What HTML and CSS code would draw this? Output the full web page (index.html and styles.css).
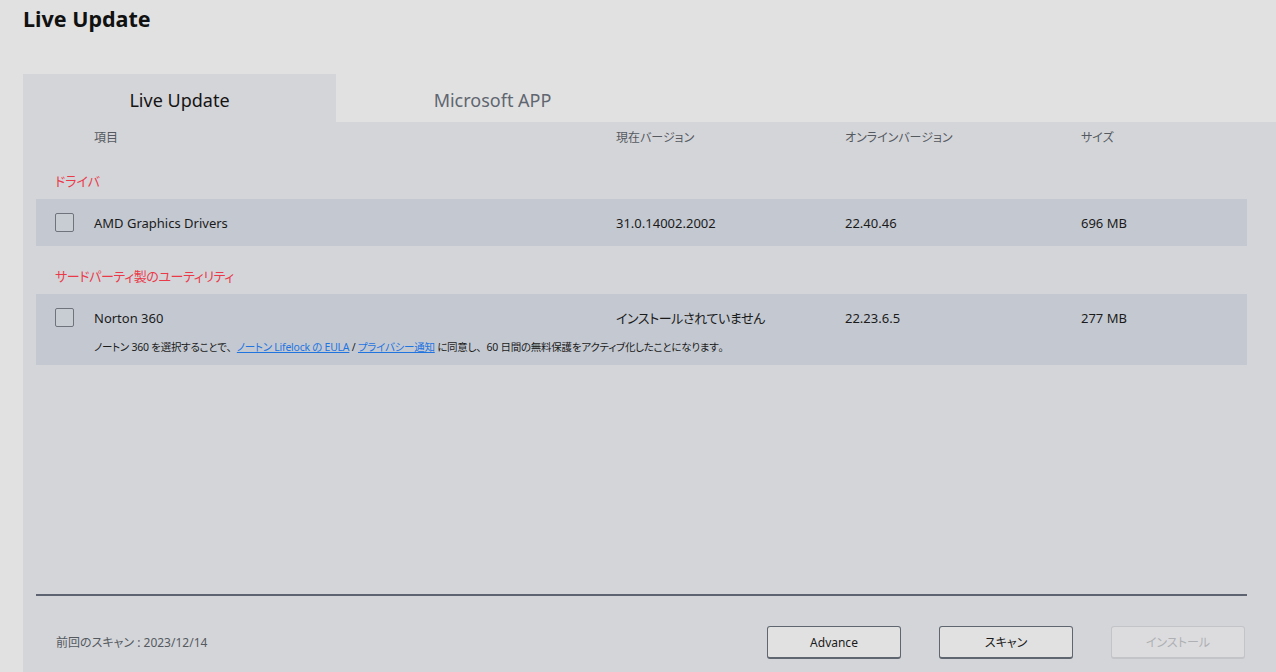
FILE: index.html
```html
<!DOCTYPE html>
<html lang="ja">
<head>
<meta charset="utf-8">
<title>Live Update</title>
<link rel="stylesheet" href="styles.css">
</head>
<body>
<div class="app">
  <header class="page-head">
    <h1 class="page-title">Live Update</h1>
  </header>
  <nav class="tabs">
    <div class="tab tab-active">Live Update</div>
    <div class="tab">Microsoft APP</div>
  </nav>
  <main class="panel">
    <section class="list">
      <div class="grid col-head">
        <span></span>
        <span>項目</span>
        <span>現在バージョン</span>
        <span>オンラインバージョン</span>
        <span>サイズ</span>
      </div>
      <div class="category">ドライバ</div>
      <div class="item">
        <div class="grid item-main">
          <span class="checkbox"></span>
          <span>AMD Graphics Drivers</span>
          <span>31.0.14002.2002</span>
          <span>22.40.46</span>
          <span>696 MB</span>
        </div>
      </div>
      <div class="category cat-long">サードパーティ製のユーティリティ</div>
      <div class="item">
        <div class="grid item-main">
          <span class="checkbox"></span>
          <span>Norton 360</span>
          <span class="jp">インストールされていません</span>
          <span>22.23.6.5</span>
          <span>277 MB</span>
        </div>
        <p class="note">ノートン 360 を選択することで<span class="punct">、</span><a href="#">ノートン Lifelock の EULA</a> / <a href="#">プライバシー通知</a> に同意し<span class="punct">、</span>60 日間の無料保護をアクティブ化したことになります<span class="punct">。</span></p>
      </div>
    </section>
    <hr class="divider">
    <footer class="footer">
      <span class="last-scan">前回のスキャン : 2023/12/14</span>
      <div class="actions">
        <button class="btn">Advance</button>
        <button class="btn">スキャン</button>
        <button class="btn btn-disabled" disabled>インストール</button>
      </div>
    </footer>
  </main>
</div>
</body>
</html>
```
FILE: styles.css
```css
* { box-sizing: border-box; }
html, body {
  margin: 0;
  padding: 0;
  height: 100%;
}
body {
  background: #e1e1e1;
  font-family: "Noto Sans", "Noto Sans CJK JP", sans-serif;
  font-feature-settings: "palt";
  color: #1b1b1b;
  overflow: hidden;
}
.app {
  height: 672px;
  display: flex;
  flex-direction: column;
}
.page-head {
  height: 74px;
  padding: 4px 0 0 23px;
}
.page-title {
  margin: 0;
  font-size: 21.5px;
  font-weight: 700;
  line-height: 30px;
  color: #111;
}
.tabs {
  display: flex;
  margin-left: 23px;
  height: 48px;
}
.tab {
  width: 313px;
  display: flex;
  align-items: center;
  justify-content: center;
  font-size: 18px;
  color: #5f6670;
  padding-top: 4px;
}
.tab-active {
  background: #d4d5d9;
  color: #141414;
}
.panel {
  flex: 1;
  margin-left: 23px;
  background: #d4d5d9;
  display: flex;
  flex-direction: column;
  padding: 0 29px 0 13px;
  min-height: 0;
}
.list {
  flex: 1;
}
.grid {
  display: grid;
  grid-template-columns: 58px 522px 229px 236px 1fr;
  align-items: center;
}
.col-head {
  height: 29px;
  font-size: 12px;
  color: #555a61;
}
.category {
  padding: 20px 0 8px 19px;
  line-height: 20px;
  font-size: 13px;
  color: #ea3a4a;
}
.cat-long {
  letter-spacing: -0.4px;
}
.item {
  background: #c4c9d1;
}
.item-main {
  height: 47px;
  font-size: 13px;
  color: #1b1b1b;
}
.jp {
  letter-spacing: -0.4px;
}
.checkbox {
  width: 19px;
  height: 19px;
  margin-left: 19px;
  border: 1.5px solid #6e737c;
  border-radius: 2px;
  background: #c8ccd3;
}
.note {
  margin: -3px 0 0 58px;
  padding-bottom: 9px;
  font-size: 10.5px;
  letter-spacing: -0.25px;
  line-height: 18px;
  color: #1b1b1b;
}
.note .punct {
  font-feature-settings: normal;
}
.note a {
  color: #1f74e0;
  text-decoration: underline;
}
.divider {
  margin: 0;
  border: 0;
  height: 2px;
  background: #5d6370;
}
.footer {
  height: 76px;
  display: flex;
  align-items: flex-start;
  justify-content: space-between;
  padding: 30px 0 0 20px;
}
.last-scan {
  font-size: 12px;
  color: #555a61;
  line-height: 33px;
}
.actions {
  display: flex;
  gap: 38px;
  margin-right: 2px;
}
.btn {
  width: 134px;
  height: 33px;
  background: #e1e1e1;
  border: 1px solid #5f6670;
  border-bottom-width: 2px;
  border-radius: 3px;
  font-family: "Noto Sans", "Noto Sans CJK JP", sans-serif;
  font-feature-settings: "palt";
  font-size: 12px;
  color: #1b1b1b;
  padding: 0;
}
.btn-disabled {
  border-color: #c2c4c8;
  color: #aeb0b4;
  background: #dcdcde;
}
```
